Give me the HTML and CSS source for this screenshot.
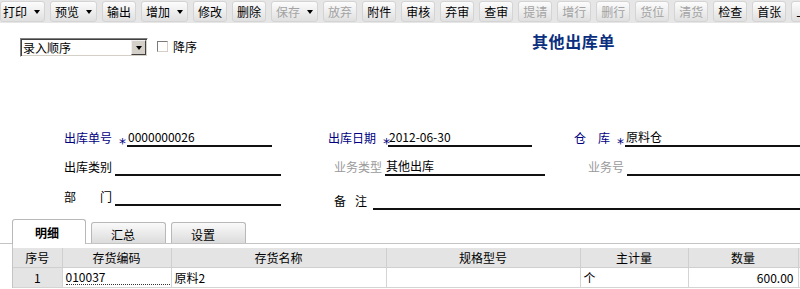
FILE: index.html
```html
<!DOCTYPE html>
<html>
<head>
    <title>其他出库单</title>
    <meta charset="UTF-8" />
    <link rel="stylesheet" href="styles.css">
</head>
<body>
    <div class="toolbar">
        <span class="tb-btn first">打印<i class="caret"></i></span>
        <span class="tb-btn">预览<i class="caret"></i></span>
        <span class="tb-btn">输出</span>
        <span class="tb-btn">增加<i class="caret"></i></span>
        <span class="tb-btn">修改</span>
        <span class="tb-btn">删除</span>
        <span class="tb-btn off">保存<i class="caret"></i></span>
        <span class="tb-btn off">放弃</span>
        <span class="tb-btn">附件</span>
        <span class="tb-btn">审核</span>
        <span class="tb-btn">弃审</span>
        <span class="tb-btn">查审</span>
        <span class="tb-btn off">提请</span>
        <span class="tb-btn off">增行</span>
        <span class="tb-btn off">删行</span>
        <span class="tb-btn off">货位</span>
        <span class="tb-btn off">清货</span>
        <span class="tb-btn">检查</span>
        <span class="tb-btn">首张</span>
        <span class="tb-btn">上张</span>
    </div>

    <div class="top-row">
        <div class="combo">
            <span class="combo-text">录入顺序</span>
            <span class="combo-btn"><i class="caret"></i></span>
        </div>
        <span class="check-box"></span>
        <span class="check-label">降序</span>
        <h1 class="title">其他出库单</h1>
    </div>

    <div class="form">
        <div class="row">
            <div class="field">
                <span class="lbl blue w48">出库单号</span><span class="star">*</span>
                <span class="val w145">0000000026</span>
            </div>
            <div class="field ml56">
                <span class="lbl blue w48">出库日期</span><span class="star">*</span>
                <span class="val w144 ml0">2012-06-30</span>
            </div>
            <div class="field grow ml42">
                <span class="lbl blue spread w36"><span>仓</span><span>库</span></span><span class="star">*</span>
                <span class="val grow">原料仓</span>
            </div>
        </div>
        <div class="row">
            <div class="field">
                <span class="lbl w48">出库类别</span>
                <span class="val w166"></span>
            </div>
            <div class="field ml53">
                <span class="lbl grey w48">业务类型</span>
                <span class="val w160">其他出库</span>
            </div>
            <div class="field grow ml43">
                <span class="lbl grey w36">业务号</span>
                <span class="val grow"></span>
            </div>
        </div>
        <div class="row">
            <div class="field">
                <span class="lbl spread w48"><span>部</span><span>门</span></span>
                <span class="val w166"></span>
            </div>
            <div class="field grow ml53 low">
                <span class="lbl spread w33"><span>备</span><span>注</span></span>
                <span class="val grow ml6"></span>
            </div>
        </div>
    </div>

    <div class="tabs">
        <span class="tab active">明细</span>
        <span class="tab">汇总</span>
        <span class="tab">设置</span>
    </div>

    <div class="pane">
        <table class="grid">
            <colgroup>
                <col style="width:49px">
                <col style="width:109px">
                <col style="width:215px">
                <col style="width:194px">
                <col style="width:108px">
                <col style="width:110px">
                <col style="width:120px">
            </colgroup>
            <tr>
                <th class="first">序号</th>
                <th>存货编码</th>
                <th>存货名称</th>
                <th>规格型号</th>
                <th>主计量</th>
                <th>数量</th>
                <th></th>
            </tr>
            <tr>
                <td class="first num">1</td>
                <td class="focus"><span>010037</span></td>
                <td>原料2</td>
                <td></td>
                <td>个</td>
                <td class="right">600.00</td>
                <td></td>
            </tr>
        </table>
    </div>
</body>
</html>
```

FILE: styles.css
```css
body {
    margin: 0;
    width: 800px;
    overflow: hidden;
    font-family: "Noto Sans CJK SC", sans-serif;
    font-size: 12px;
    color: #000;
    background: #fff;
}

/* toolbar */
.toolbar {
    display: flex;
    gap: 5px;
    height: 23px;
    padding-top: 1px;
    box-sizing: border-box;
    background: #e6e6e6;
    white-space: nowrap;
    overflow: hidden;
}

.tb-btn {
    display: flex;
    align-items: center;
    flex-shrink: 0;
    height: 19px;
    padding: 0 4px;
    border: 1px solid #d4d4d4;
    border-radius: 3px;
    background: linear-gradient(#fcfcfc, #e0e0e0);
    line-height: 19px;
}

.tb-btn.first {
    padding-left: 2px;
}

.tb-btn.off {
    color: #a3a3a3;
}

.tb-btn .caret {
    margin-left: 7px;
}

.caret {
    display: inline-block;
    width: 0;
    height: 0;
    border-left: 3px solid transparent;
    border-right: 3px solid transparent;
    border-top: 4px solid #000;
}

/* sort row */
.top-row {
    display: flex;
    align-items: flex-start;
    height: 19px;
    padding: 15px 0 0 20px;
}

.combo {
    display: flex;
    justify-content: space-between;
    width: 128px;
    height: 19px;
    box-sizing: border-box;
    border: 1px solid;
    border-color: #808080 #ffffff #ffffff #808080;
    box-shadow: inset 1px 1px 0 #404040, inset -1px -1px 0 #d4d0c8;
    background: #fff;
}

.combo-text {
    padding: 1px 0 0 2px;
    line-height: 15px;
}

.combo-btn {
    display: flex;
    align-items: center;
    justify-content: center;
    width: 15px;
    height: 15px;
    margin: 1px 1px 0 0;
    box-sizing: border-box;
    background: #d4d0c8;
    border: 1px solid;
    border-color: #f0f0f0 #404040 #404040 #f0f0f0;
}

.check-box {
    width: 11px;
    height: 11px;
    margin: 3px 0 0 9px;
    box-sizing: border-box;
    border: 1px solid;
    border-color: #7a7a7a #d4d0c8 #d4d0c8 #7a7a7a;
    background: #fff;
}

.check-label {
    margin: 2px 0 0 5px;
    line-height: 14px;
}

.title {
    margin: -6px 0 0 335px;
    font-size: 16px;
    letter-spacing: 0.6px;
    line-height: 18px;
    font-weight: bold;
    color: #0b2f7e;
}

/* header fields */
.form {
    margin-top: 72px;
}

.row {
    display: flex;
    align-items: flex-end;
    height: 18px;
    padding-left: 64px;
    margin-bottom: 11px;
}

.row:nth-child(2) {
    margin-bottom: 12px;
}

.field {
    display: flex;
    align-items: flex-end;
}

.field.grow,
.val.grow {
    flex: 1;
}

.field.low {
    margin-bottom: -4px;
}

.lbl {
    line-height: 14px;
    padding-bottom: 2px;
    white-space: nowrap;
}

.lbl.blue {
    color: #00007f;
}

.lbl.grey {
    color: #9a9a9a;
}

.lbl.spread {
    display: flex;
    justify-content: space-between;
}

.star {
    width: 5px;
    margin: 0 0 -3px 7px;
    font-family: "DejaVu Sans", sans-serif;
    font-size: 14px;
    line-height: 14px;
    color: #00007f;
}

.val {
    height: 18px;
    margin-left: 3px;
    padding: 1px 0 0 1px;
    box-sizing: border-box;
    border-bottom: 2px solid #111;
    line-height: 14px;
    white-space: nowrap;
}

.w33 { width: 33px; }
.w36 { width: 36px; }
.w48 { width: 48px; }
.w144 { width: 144px; }
.w145 { width: 145px; }
.w160 { width: 160px; }
.w166 { width: 166px; }
.ml0 { margin-left: 0; }
.ml6 { margin-left: 6px; }
.ml42 { margin-left: 42px; }
.ml43 { margin-left: 43px; }
.ml53 { margin-left: 53px; }
.ml56 { margin-left: 56px; }

/* tabs */
.tabs {
    display: flex;
    align-items: flex-end;
    gap: 5px;
    height: 24px;
    margin-top: 13px;
    padding-left: 12px;
    border-bottom: 1px solid #c4c4c4;
}

.tab {
    width: 75px;
    height: 21px;
    box-sizing: border-box;
    padding: 5px 0 0 19px;
    border: 1px solid #b8b8b8;
    border-bottom: none;
    border-radius: 3px 3px 0 0;
    background: linear-gradient(#fafafa, #dcdcdc);
    line-height: 14px;
}

.tab.active {
    width: 74px;
    height: 25px;
    margin-bottom: -1px;
    padding: 6px 0 0 22px;
    background: #fff;
    font-weight: bold;
}

/* detail grid */
.pane {
    margin-left: 12px;
    padding-top: 4px;
    border-left: 1px solid #c4c4c4;
}

.grid {
    border-collapse: collapse;
    table-layout: fixed;
    width: 905px;
}

.grid th {
    height: 19px;
    padding: 0;
    background: #e4e4e4;
    border: 1px solid #cfcfcf;
    border-top: none;
    font-weight: normal;
    text-align: center;
    line-height: 14px;
}

.grid td {
    height: 19px;
    padding: 0 0 0 3px;
    border: 1px solid #d4d4d4;
    line-height: 14px;
    white-space: nowrap;
}

.grid .first {
    border-left: none;
}

.grid td.num {
    padding: 0;
    text-align: center;
    background: #e4e4e4;
}

.grid td.right {
    padding-right: 4px;
    text-align: right;
}

.grid td.focus span {
    display: block;
    margin-right: 1px;
    border-bottom: 1px dotted #333;
}
```
